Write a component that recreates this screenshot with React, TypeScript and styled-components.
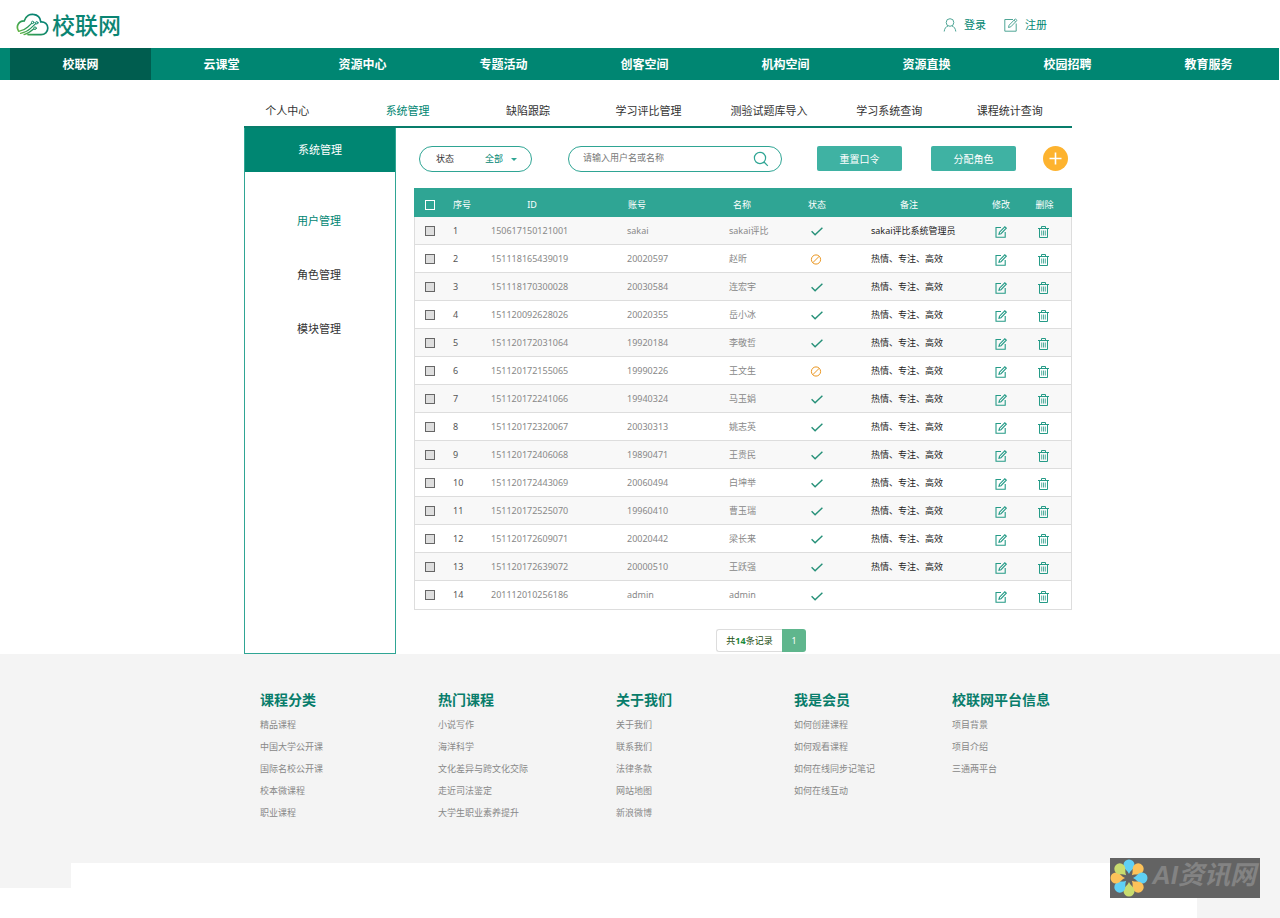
import React from "react";
import styled, { createGlobalStyle, css } from "styled-components";

const green = "#008672";
const teal = "#2fa594";

const GlobalStyle = createGlobalStyle`
  * { box-sizing: border-box; }
  body {
    margin: 0;
    background: #fff;
    color: #333;
    font: 11px/16px "Noto Sans", "Noto Sans CJK SC", sans-serif;
  }
  a { color: inherit; text-decoration: none; }
  ul { list-style: none; margin: 0; padding: 0; }
  button, input, select { font: inherit; }
`;

const Columns = styled.div`
  display: grid;
  grid-template-columns: 244fr 828fr 208fr;
`;

const Center = styled.div`
  grid-column: 2;
  min-width: 0;
`;

const TopBar = styled(Columns).attrs({ as: "header" })`
  height: 48px;
  align-items: center;
`;

const Brand = styled.a`
  display: flex;
  align-items: center;
  gap: 2px;
  padding: 2px 0 0 16px;
  color: #0a8573;
  font-size: 23px;
  font-weight: 500;
  line-height: 26px;
`;

const Account = styled.nav`
  display: flex;
  justify-content: flex-end;
  gap: 18px;
  padding: 2px 25px 0 0;
  color: ${green};
`;

const AccountLink = styled.a`
  display: flex;
  align-items: center;
  gap: 7px;
`;

const MainNav = styled.nav`
  display: flex;
  height: 32px;
  margin-right: 1px;
  padding-left: 10px;
  background: ${green};
`;

const MainNavLink = styled.a<{ $active?: boolean }>`
  flex: 1;
  background: ${(p) => (p.$active ? "#005d4f" : "transparent")};
  color: #fff;
  font-size: 12px;
  font-weight: 700;
  line-height: 34px;
  text-align: center;
`;

const SubNav = styled.nav`
  display: flex;
  height: 46px;
  margin: 0 2px 0 -17px;
  padding-top: 23px;
`;

const SubNavLink = styled.a<{ $active?: boolean }>`
  flex: 1;
  color: ${(p) => (p.$active ? green : "#333")};
  text-align: center;
`;

const Panel = styled.div`
  display: flex;
  border-top: 2px solid #087d6b;
`;

const Sidebar = styled.aside`
  flex: none;
  width: 152px;
  border: 1px solid ${teal};
  border-top: 0;
`;

const SidebarTitle = styled.h2`
  margin: 0;
  background: ${green};
  color: #fff;
  font-size: 11px;
  font-weight: 400;
  line-height: 44px;
  text-align: center;
`;

const SidebarMenu = styled.ul`
  padding: 22px 2px 0 0;
`;

const SidebarLink = styled.a<{ $active?: boolean }>`
  display: block;
  color: ${(p) => (p.$active ? green : "#333")};
  line-height: 54px;
  text-align: center;
`;

const Content = styled.main`
  flex: 1;
  min-width: 0;
  padding-left: 18px;
`;

const Toolbar = styled.form`
  display: flex;
  align-items: center;
  height: 60px;
  padding: 1px 4px 0 5px;
`;

const pill = css`
  display: flex;
  align-items: center;
  height: 26px;
  border: 1px solid ${teal};
  border-radius: 13px;
  font-size: 9px;
`;

const StatusFilter = styled.label`
  ${pill}
  position: relative;
  width: 113px;
  margin-right: 36px;
  padding-left: 16px;
`;

const StatusSelect = styled.select`
  flex: 1;
  height: 24px;
  margin-left: 31px;
  padding: 0;
  appearance: none;
  border: 0;
  background: transparent;
  color: ${green};
  outline: none;
`;

const Caret = styled.span`
  position: absolute;
  right: 14px;
  top: 11px;
  border: 3px solid transparent;
  border-top-color: ${teal};
  border-bottom: 0;
  pointer-events: none;
`;

const Search = styled.div`
  ${pill}
  flex: 1;
  margin-right: 6px;
  padding: 0 12px 0 14px;
`;

const SearchInput = styled.input`
  flex: 1;
  min-width: 0;
  height: 24px;
  padding: 0 0 2px;
  border: 0;
  background: transparent;
  outline: none;
  &::placeholder { color: #777; }
`;

const BareButton = styled.button`
  display: inline-flex;
  align-items: center;
  justify-content: center;
  padding: 0;
  border: 0;
  background: none;
  vertical-align: middle;
  cursor: pointer;
`;

const ActionButton = styled.button`
  width: 85px;
  height: 25px;
  margin-left: 29px;
  padding: 0;
  border: 0;
  border-radius: 2px;
  background: #3fb2a3;
  color: #fff;
  font-size: 10px;
`;

const AddButton = styled(BareButton)`
  width: 25px;
  height: 25px;
  margin-left: 27px;
  border-radius: 50%;
  background: #fdb32f;
`;

const Table = styled.table`
  width: 100%;
  table-layout: fixed;
  border: 1px solid #ddd;
  border-top: 0;
  border-collapse: separate;
  border-spacing: 0;
  font-size: 9px;
  line-height: 16px;
`;

const Col = styled.col<{ $w: number }>`
  width: ${(p) => p.$w}px;
`;

const HeadRow = styled.tr`
  background: ${teal};
  box-shadow: -1px 0 ${teal}, 1px 0 ${teal};
`;

type CellProps = { $left?: number; $right?: number };

const HeadCell = styled.th<CellProps>`
  height: 29px;
  padding: 4px ${(p) => p.$right ?? 0}px 0 ${(p) => p.$left ?? 0}px;
  color: #fff;
  font-weight: 400;
  text-align: ${(p) => (p.$left ? "left" : "center")};
`;

const Row = styled.tr`
  &:nth-child(odd) { background: #f8f8f8; }
  &:not(:last-child) td { border-bottom: 1px solid #ddd; }
`;

const Cell = styled.td<CellProps & { $tone?: string }>`
  height: 28px;
  padding: 0 ${(p) => p.$right ?? 0}px 0 ${(p) => p.$left ?? 0}px;
  color: ${(p) => p.$tone ?? "#888"};
  text-align: ${(p) => (p.$left ? "left" : "center")};
  white-space: nowrap;
  svg { display: block; margin: 0 auto; }
`;

const IconCell = styled(Cell)`
  padding-top: 2px;
`;

const Tick = styled.input.attrs({ type: "checkbox" })<{ $light?: boolean }>`
  display: block;
  width: 10px;
  height: 10px;
  margin: 0 0 0 10px;
  appearance: none;
  border: 1px solid ${(p) => (p.$light ? "#fff" : "#666")};
  background: ${(p) => (p.$light ? "transparent" : "#dedede")};
`;

const Pager = styled.nav`
  display: flex;
  width: 90px;
  height: 23px;
  margin: 19px auto 2px 302px;
  font-size: 9px;
  line-height: 21px;
`;

const PagerTotal = styled.span`
  flex: 1;
  border: 1px solid #ddd;
  border-right: 0;
  border-radius: 3px 0 0 3px;
  color: #1d4d10;
  text-align: center;
  b { color: #178a3a; }
`;

const PagerPage = styled.a`
  width: 24px;
  border-radius: 0 3px 3px 0;
  background: #5fb68d;
  color: #fff;
  line-height: 23px;
  text-align: center;
`;

const Footer = styled.footer`
  background: #f4f4f4;
`;

const FooterColumns = styled(Center)`
  display: grid;
  grid-template-columns: 178fr 178fr 178fr 158fr 120fr;
  min-height: 209px;
  padding: 35px 0 0 16px;
`;

const FooterTitle = styled.h3`
  margin: 0 0 3px;
  color: #087d6b;
  font-size: 14px;
  font-weight: 700;
  line-height: 22px;
  white-space: nowrap;
`;

const FooterLink = styled.a`
  display: block;
  color: #888;
  font-size: 9px;
  line-height: 22px;
  white-space: nowrap;
`;

const FooterTail = styled.div`
  display: flex;
  justify-content: space-between;
  height: 55px;
  background: #fff;
`;

const TailBlock = styled.div<{ $w: number; $h: number }>`
  width: ${(p) => p.$w}px;
  height: ${(p) => p.$h}px;
  background: #f4f4f4;
`;

const Page = styled.div`
  position: relative;
`;

const Watermark = styled.div`
  position: absolute;
  right: 20px;
  bottom: 20px;
  display: flex;
  align-items: center;
  width: 150px;
  height: 40px;
  background: #636363;
  color: #838383;
  font-family: "Liberation Sans", "Noto Sans CJK SC", sans-serif;
  font-size: 26px;
  font-style: italic;
  font-weight: 700;
  line-height: 34px;
  white-space: nowrap;
  svg { flex: none; }
  span { margin-top: -6px; margin-left: 4px; }
`;

const CloudLogo = () => (
  <svg width="34" height="24" viewBox="0 0 34 24" fill="none" strokeLinecap="round" aria-hidden="true">
    <defs>
      <linearGradient id="cloud" gradientUnits="userSpaceOnUse" x1="2" y1="23" x2="20" y2="6">
        <stop offset="0" stopColor="#7cc142" />
        <stop offset="0.5" stopColor="#2b9a55" />
        <stop offset="1" stopColor="#0a8573" />
      </linearGradient>
    </defs>
    <g stroke="url(#cloud)">
      <path strokeWidth="1.7" d="M2.600 18C-.3 13.500 2.200 8 8.300 7.800 10 2.800 14 1 17.300 1.400c4.200 .4 7 3.200 7.500 7.400 4-.3 7 2.600 7 6.200 0 4-3 6.600-6.800 6.600H12" />
      <path strokeWidth="1.200" d="M2.800 18.300c4.200-.8 7-2.300 9-4.300l3.800-3.600M4.500 20.300c4.500-.8 7.500-2.500 9.800-4.700l5.400-5M8 21.600c3.800-1 6.300-2.800 9.600-5.600" />
      <circle cx="16.700" cy="9.400" r="1.200" strokeWidth="1" />
      <circle cx="20.800" cy="9.800" r="1.200" strokeWidth="1" />
      <circle cx="19" cy="15.200" r="1.300" strokeWidth="1" />
    </g>
  </svg>
);

const PersonIcon = () => (
  <svg width="14" height="14" viewBox="0 0 14 14" fill="none" stroke="#4fa596" aria-hidden="true">
    <circle cx="7" cy="4.500" r="3.800" />
    <path d="M1.200 13.500C1.500 10.500 3 8.600 5 8M9 8c2 .6 3.500 2.500 3.800 5.500" />
  </svg>
);

const RegisterIcon = () => (
  <svg width="14" height="14" viewBox="0 0 14 14" fill="none" stroke="#4fa596" aria-hidden="true">
    <path d="M9 1.500H.8v11.700h11.400V5.500M4.500 9.500l.6-2.300L11.300.9l1.700 1.500-6.200 6.400zM10 2.200l1.600 1.500" />
  </svg>
);

const SearchIcon = () => (
  <svg width="16" height="16" viewBox="0 0 16 16" fill="none" stroke={teal} strokeWidth="1.200" aria-hidden="true">
    <circle cx="7" cy="7" r="5.600" />
    <path d="M11 11l3.800 3.800" />
  </svg>
);

const PlusIcon = () => (
  <svg width="13" height="13" viewBox="0 0 13 13" stroke="#fff" strokeWidth="1.600" aria-hidden="true">
    <path d="M6.500 .5v12M.5 6.500h12" />
  </svg>
);

const CheckIcon = () => (
  <svg width="12" height="9" viewBox="0 0 12 9" fill="none" stroke="#259078" strokeWidth="1.400" role="img" aria-label="启用">
    <path d="M.6 4.300l3.500 3.500L11.400.7" />
  </svg>
);

const BanIcon = () => (
  <svg width="14" height="11" viewBox="0 0 14 11" fill="none" stroke="#ea9620" role="img" aria-label="停用">
    <circle cx="6" cy="5.500" r="4.600" />
    <path d="M2.800 8.700l6.400-6.400" />
  </svg>
);

const EditIcon = () => (
  <svg width="12" height="12" viewBox="0 0 12 12" fill="none" stroke="#259b87" strokeWidth="1.100" aria-hidden="true">
    <path d="M6 1.500H1v9.800h9.200V6M4 8.200l.5-2L9.800.8l1.500 1.400L6 7.700z" />
  </svg>
);

const TrashIcon = () => (
  <svg width="11" height="12" viewBox="0 0 11 12" fill="none" stroke="#259b87" aria-hidden="true">
    <path d="M0 2.500h11M3.500 2.500v-2h4v2M1.500 2.500v9h8v-9" />
    <path strokeWidth=".8" d="M3.700 4.500v5M5.500 4.500v5M7.300 4.500v5" />
  </svg>
);

const petals = ["#5fd0f5", "#fcc25a", "#5fd0f5", "#fcc25a", "#c9dc6f", "#5fd0f5", "#fcc25a", "#c9dc6f"];

const FlowerLogo = () => (
  <svg width="38" height="38" viewBox="-19 -19 38 38" aria-hidden="true">
    {petals.map((fill, i) => (
      <path key={i} fill={fill} transform={`rotate(${i * 45})`} d="M0-4C-1.500-8-5.500-9-5.500-13a5.500 5.500 0 0 1 11 0C5.500-9 1.500-8 0-4z" />
    ))}
  </svg>
);

const mainNav = ["校联网", "云课堂", "资源中心", "专题活动", "创客空间", "机构空间", "资源直换", "校园招聘", "教育服务"];
const subNav = ["个人中心", "系统管理", "缺陷跟踪", "学习评比管理", "测验试题库导入", "学习系统查询", "课程统计查询"];
const sideMenu = ["用户管理", "角色管理", "模块管理"];
const motto = "热情、专注、高效";

type User = { id: string; account: string; name: string; off?: boolean; note?: string };

const users: User[] = [
  { id: "150617150121001", account: "sakai", name: "sakai评比", note: "sakai评比系统管理员" },
  { id: "151118165439019", account: "20020597", name: "赵昕", off: true, note: motto },
  { id: "151118170300028", account: "20030584", name: "连宏宇", note: motto },
  { id: "151120092628026", account: "20020355", name: "岳小冰", note: motto },
  { id: "151120172031064", account: "19920184", name: "李敬哲", note: motto },
  { id: "151120172155065", account: "19990226", name: "王文生", off: true, note: motto },
  { id: "151120172241066", account: "19940324", name: "马玉娟", note: motto },
  { id: "151120172320067", account: "20030313", name: "姚志英", note: motto },
  { id: "151120172406068", account: "19890471", name: "王贵民", note: motto },
  { id: "151120172443069", account: "20060494", name: "白坤举", note: motto },
  { id: "151120172525070", account: "19960410", name: "曹玉瑞", note: motto },
  { id: "151120172609071", account: "20020442", name: "梁长来", note: motto },
  { id: "151120172639072", account: "20000510", name: "王跃强", note: motto },
  { id: "201112010256186", account: "admin", name: "admin" },
];

const footer = [
  { title: "课程分类", links: ["精品课程", "中国大学公开课", "国际名校公开课", "校本微课程", "职业课程"] },
  { title: "热门课程", links: ["小说写作", "海洋科学", "文化差异与跨文化交际", "走近司法鉴定", "大学生职业素养提升"] },
  { title: "关于我们", links: ["关于我们", "联系我们", "法律条款", "网站地图", "新浪微博"] },
  { title: "我是会员", links: ["如何创建课程", "如何观看课程", "如何在线同步记笔记", "如何在线互动"] },
  { title: "校联网平台信息", links: ["项目背景", "项目介绍", "三通两平台"] },
];

export default function App() {
  return (
    <Page>
      <GlobalStyle />
      <TopBar>
        <Brand href="#"><CloudLogo />校联网</Brand>
        <Account>
          <AccountLink href="#"><PersonIcon />登录</AccountLink>
          <AccountLink href="#"><RegisterIcon />注册</AccountLink>
        </Account>
      </TopBar>
      <MainNav>
        {mainNav.map((t, i) => <MainNavLink key={t} href="#" $active={i === 0}>{t}</MainNavLink>)}
      </MainNav>
      <Columns>
        <Center>
          <SubNav>
            {subNav.map((t, i) => <SubNavLink key={t} href="#" $active={i === 1}>{t}</SubNavLink>)}
          </SubNav>
          <Panel>
            <Sidebar>
              <SidebarTitle>系统管理</SidebarTitle>
              <SidebarMenu>
                {sideMenu.map((t, i) => (
                  <li key={t}><SidebarLink href="#" $active={i === 0}>{t}</SidebarLink></li>
                ))}
              </SidebarMenu>
            </Sidebar>
            <Content>
              <Toolbar onSubmit={(e) => e.preventDefault()}>
                <StatusFilter>
                  状态
                  <StatusSelect defaultValue="全部">
                    <option>全部</option>
                  </StatusSelect>
                  <Caret />
                </StatusFilter>
                <Search>
                  <SearchInput type="text" aria-label="搜索用户" placeholder="请输入用户名或名称" />
                  <BareButton type="submit" aria-label="搜索"><SearchIcon /></BareButton>
                </Search>
                <ActionButton type="button">重置口令</ActionButton>
                <ActionButton type="button">分配角色</ActionButton>
                <AddButton type="button" aria-label="添加"><PlusIcon /></AddButton>
              </Toolbar>
              <Table>
                <colgroup>
                  {[31, 38, 96, 114, 96, 54, 130, 54, 43].map((w, i) => <Col key={i} $w={w} />)}
                </colgroup>
                <thead>
                  <HeadRow>
                    <HeadCell><Tick $light aria-label="全选" /></HeadCell>
                    <HeadCell $left={7}>序号</HeadCell>
                    <HeadCell>ID</HeadCell>
                    <HeadCell>账号</HeadCell>
                    <HeadCell>名称</HeadCell>
                    <HeadCell>状态</HeadCell>
                    <HeadCell>备注</HeadCell>
                    <HeadCell>修改</HeadCell>
                    <HeadCell $right={10}>删除</HeadCell>
                  </HeadRow>
                </thead>
                <tbody>
                  {users.map((u, i) => (
                    <Row key={u.id}>
                      <Cell><Tick aria-label={`选择 ${u.name}`} /></Cell>
                      <Cell $left={7} $tone="#555">{i + 1}</Cell>
                      <Cell $left={7}>{u.id}</Cell>
                      <Cell $left={47}>{u.account}</Cell>
                      <Cell $left={35}>{u.name}</Cell>
                      <IconCell>{u.off ? <BanIcon /> : <CheckIcon />}</IconCell>
                      <Cell $left={27} $tone="#222">{u.note}</Cell>
                      <IconCell><BareButton type="button" aria-label="修改"><EditIcon /></BareButton></IconCell>
                      <IconCell $right={12}><BareButton type="button" aria-label="删除"><TrashIcon /></BareButton></IconCell>
                    </Row>
                  ))}
                </tbody>
              </Table>
              <Pager>
                <PagerTotal>共<b>14</b>条记录</PagerTotal>
                <PagerPage href="#">1</PagerPage>
              </Pager>
            </Content>
          </Panel>
        </Center>
      </Columns>
      <Footer>
        <Columns>
          <FooterColumns>
            {footer.map((c) => (
              <section key={c.title}>
                <FooterTitle>{c.title}</FooterTitle>
                {c.links.map((l) => <FooterLink key={l} href="#">{l}</FooterLink>)}
              </section>
            ))}
          </FooterColumns>
        </Columns>
        <FooterTail>
          <TailBlock $w={71} $h={25} />
          <TailBlock $w={83} $h={55} />
        </FooterTail>
      </Footer>
      <Watermark><FlowerLogo /><span>AI资讯网</span></Watermark>
    </Page>
  );
}
